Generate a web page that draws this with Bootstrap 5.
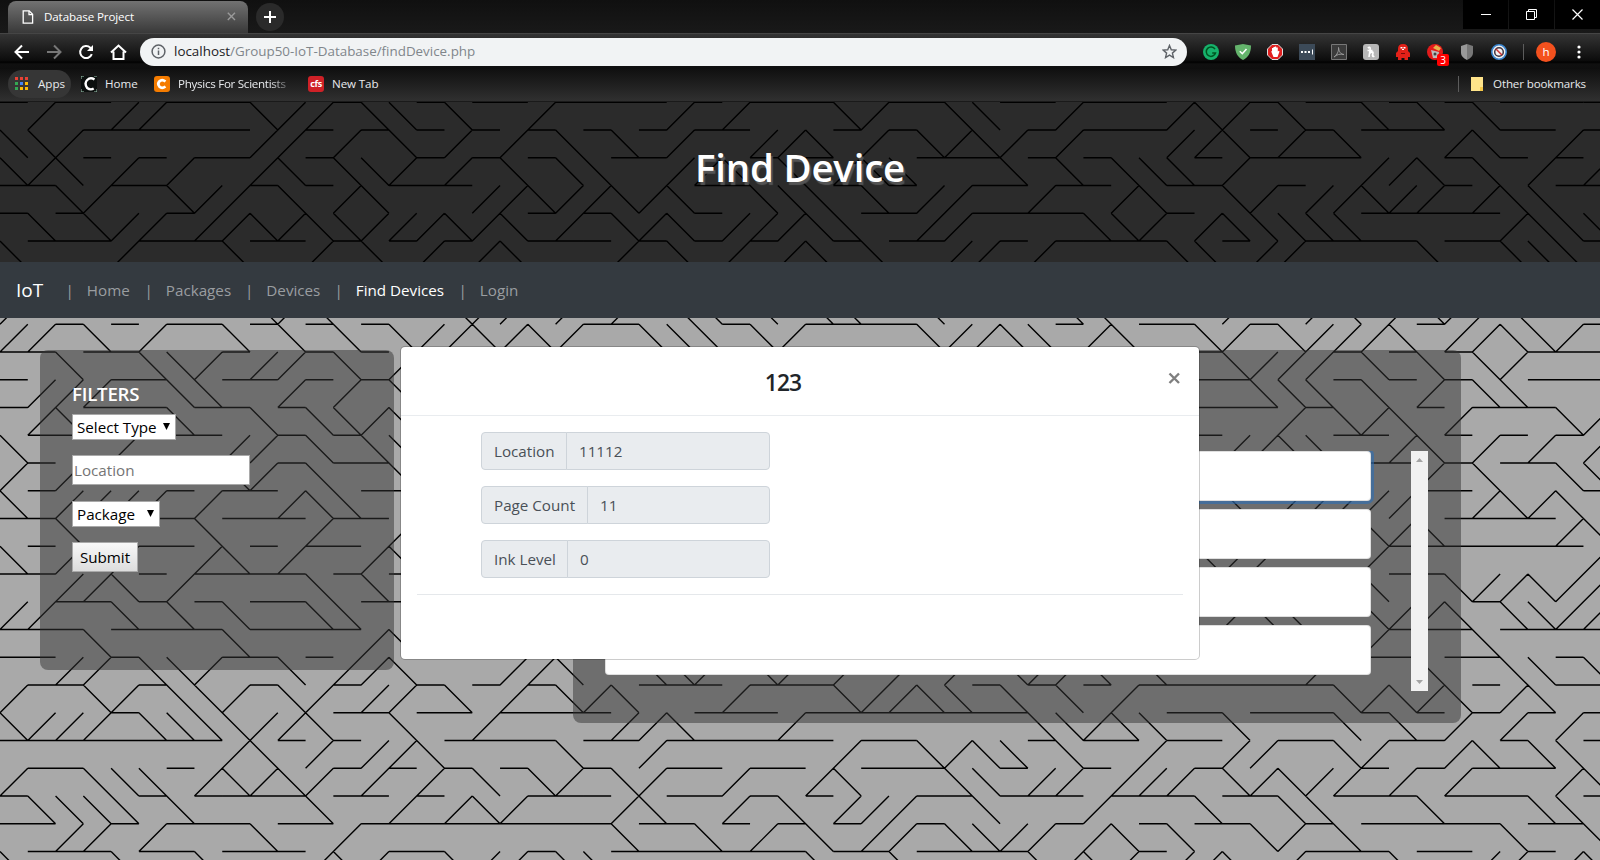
<!DOCTYPE html>
<html lang="en">
<head>
<meta charset="utf-8">
<title>Database Project</title>
<link rel="stylesheet" href="https://cdn.jsdelivr.net/npm/bootstrap@5.3.0/dist/css/bootstrap.min.css">
<style>
  body{font-family:"Open Sans","Noto Sans",sans-serif;font-size:15.2px;width:1600px;height:860px;overflow:hidden;background:#a9a9a9;color:#212529}
  svg{display:block;flex:none}
  .pattern{position:absolute;left:0;top:0;z-index:-1}
  /* browser chrome */
  .chrome{height:102px;font-size:11.6px;color:#e8eaed;background:#111}
  .tabstrip{height:33px;background:linear-gradient(#101010,#191919);padding-left:8px}
  .tab{width:240px;height:32px;margin-top:1px;border-radius:8px 8px 0 0;background:linear-gradient(#727272,#393939);padding:0 12px 1px 14px;letter-spacing:-.12px;color:#fff}
  .plus{width:28px;height:28px;border-radius:50%;background:#2a2a2a;margin:3px 0 0 8px}
  .winbtn{width:45px;height:29px;background:#000;margin-left:1px}
  .toolbar{height:36px;border-top:1px solid #454545;background:linear-gradient(#343434 0,#0b0b0b 27px,#000 28px,#101010 30px,#0e0e0e 36px);padding:1px 0 0 14px}
  .omni{width:1047px;height:28px;border-radius:14px;background:#f1f3f4;margin-left:13px;color:#80868b;font-size:13.4px;padding:0 10px 1px 11px}
  .omni b{font-weight:400;color:#202124}
  .bmbar{height:33px;background:linear-gradient(#101010,#303030);padding:0 14px 3px 8px;border-bottom:1px solid #1a1a1a}
  .apps{background:#363636;border-radius:14px;height:28px;width:63px;padding-left:7px}
  .fav{width:16px;height:16px;border-radius:3px;font-weight:700;line-height:16px;text-align:center}
  .ext{width:16px;margin-right:16px;position:relative}
  .cnt{position:absolute;left:10px;top:10px;width:12px;height:12px;background:#f00;border-radius:2px;font-size:10px;line-height:12px;text-align:center;color:#fff}
  .vr1{width:1px;height:16px;background:#5c5c5c}
  /* page */
  .hero{height:160px;background:rgba(0,0,0,.745);padding-top:40px}
  .hero h1{font-size:38.4px;font-weight:600;color:#fff;text-shadow:2px 3px 1px #555;line-height:50px;margin:0;letter-spacing:-.2px}
  .navrow{height:56px;background:#343a40;color:#9a9da0;padding-left:16px}
  .navrow li{display:flex;white-space:nowrap}
  .navrow li a{color:#9a9da0;text-decoration:none;margin-left:13px}
  .navrow li a.active{color:#fff}
  .logo{font-size:19px;color:#fff;width:49.5px}
  .panel{background:rgba(51,51,51,.5);border-radius:8px}
  .filters{margin-left:40px;width:354px;height:320px;padding:32px 32px}
  .filters h5{font-size:18.6px;font-weight:600;color:#fff;line-height:24px;margin:0 0 8px;letter-spacing:-.2px}
  .filters select,.filters input,.filters button{display:block;font:15.2px "Open Sans",sans-serif;border:1px solid #a9a9a9;border-radius:0;color:#000}
  .filters select{appearance:none;height:26px;padding:0 4px;background:#fff url("data:image/svg+xml,%3Csvg xmlns='http://www.w3.org/2000/svg' width='7' height='7'%3E%3Cpath d='M0 0h7L3.5 7z'/%3E%3C/svg%3E") no-repeat right 5px top 8px}
  .filters input{width:178px;height:31px;padding:0 1px 0 1px}
  .filters input::placeholder{color:#757575;opacity:1}
  .filters button{width:66px;height:30px;padding:0;background:linear-gradient(#f8f8f8,#ddd)}
  .results{width:888px;height:373px;margin-left:179px;padding:101px 33px 32px 32px}
  .scroller{height:240px;overflow:hidden}
  .rowitem{width:766px;height:50px;border-radius:4px;background:#fff;border:1px solid rgba(0,0,0,.125);background-clip:border-box;margin-bottom:8px}
  .rowitem.focus{box-shadow:0 0 0 3px rgba(38,112,190,.55)}
  .sbar{width:17px;background:#f1f1f1;padding:6px 0}
  .dialog{position:absolute;left:400px;top:346px;width:800px;height:314px;background:#fff;border:1px solid rgba(0,0,0,.2);background-clip:padding-box;border-radius:5px}
  .dhead{height:69px;border-bottom:1px solid #e9ecef;position:relative}
  .dhead h4{font-size:22.8px;font-weight:600;margin:0;padding-top:21px;line-height:30px;margin-right:34px;letter-spacing:-.9px}
  .dclose{position:absolute;right:18px;top:25px}
  .igrp{width:289px;height:38px;margin:0 0 16px 80px}
  .igrp>*{background:#e9ecef!important;color:#495057!important;border-color:#ced4da!important;font-size:15.2px;padding:0 12px;border-radius:4px}
  .dbody{padding-top:16px}
  .dbody hr{margin:0 16px;color:#dee2e6;opacity:.8}
</style>
</head>
<body class="position-relative">
<svg class="pattern" width="1600" height="860"><path id="maze" fill="none" stroke="#000" stroke-width="1.4"/></svg>

<div class="chrome">
  <div class="tabstrip d-flex">
    <div class="tab d-flex align-items-center">
      <svg width="12" height="14" viewBox="0 0 12 14" fill="none" stroke="#fff" stroke-width="1.3"><path d="M1.2.8h6l3.4 3.5v8.9H1.2z"/><path d="M7 .8v3.8h3.6"/></svg>
      <span class="flex-grow-1" style="margin-left:10px">Database Project</span>
      <svg width="9" height="9" stroke="#9a9a9a" stroke-width="1.4"><path d="M.8.8l7.2 7.2M8 .8L.8 8"/></svg>
    </div>
    <div class="plus d-flex align-items-center justify-content-center"><svg width="12" height="12" stroke="#fff" stroke-width="2"><path d="M6 0v12M0 6h12"/></svg></div>
    <div class="ms-auto d-flex">
      <div class="winbtn d-flex align-items-center justify-content-center"><svg width="10" height="2"><path d="M0 0h10v1H0z" fill="#fff"/></svg></div>
      <div class="winbtn d-flex align-items-center justify-content-center"><svg width="11" height="11" fill="none" stroke="#fff"><path d="M.5 2.5h8v8h-8zM2.5 2.5v-2h8v8h-2"/></svg></div>
      <div class="winbtn d-flex align-items-center justify-content-center"><svg width="11" height="11" stroke="#fff" stroke-width="1.2"><path d="M.5.5l10 10M10.5.5l-10 10"/></svg></div>
    </div>
  </div>
  <div class="toolbar d-flex align-items-center">
    <svg width="16" height="16" fill="none" stroke="#fff" stroke-width="2"><path d="M15 8H2M8 1.5L1.500 8 8 14.500"/></svg>
    <svg style="margin-left:17px" width="16" height="16" fill="none" stroke="#777" stroke-width="2"><path d="M0 8h13M7 1.500L13.500 8 7 14.500"/></svg>
    <svg style="margin-left:15px" width="16" height="16" fill="none" stroke="#fff" stroke-width="2"><path d="M13.800 10.200A6 6 0 1 1 12.300 3.700L13.500 5"/><path d="M15 1v6H9z" fill="#fff" stroke="none"/></svg>
    <svg style="margin-left:16px" width="17" height="16" fill="none" stroke="#fff" stroke-width="2"><path d="M1 8.500L8.500 1.500 16 8.500M3.500 7.500V15h10V7.500"/></svg>
    <div class="omni d-flex align-items-center">
      <svg width="15" height="15" fill="none" stroke="#5f6368" stroke-width="1.500"><circle cx="7.500" cy="7.500" r="6.400"/><path d="M7.500 6.500v4.600M7.500 3.700v1.600"/></svg>
      <span style="margin-left:8px"><b>localhost</b>/Group50-IoT-Database/findDevice.php</span>
      <svg class="ms-auto" width="15" height="15" viewBox="0 0 16 16" fill="none" stroke="#5f6368" stroke-width="1.500"><path d="M8 1.500l1.900 4.600 4.900.4-3.700 3.200 1.100 4.800L8 11.900l-4.200 2.600 1.100-4.800L1.200 6.500l4.900-.4z"/></svg>
    </div>
    <div class="d-flex align-items-center" style="margin-left:16px">
      <div class="ext"><svg width="16" height="16"><circle cx="8" cy="8" r="8" fill="#16b26b"/><path d="M12 5.200A4.700 4.700 0 1 0 12.500 9H9.200" fill="none" stroke="#052" stroke-width="1.500"/></svg></div>
      <div class="ext"><svg width="16" height="16"><path d="M0 1.500L8 0l8 1.500C16 9 13 13.500 8 16 3 13.500 0 9 0 1.500z" fill="#64b46c"/><path d="M4.800 7.200L7.300 9.700 11.500 5" fill="none" stroke="#fff" stroke-width="1.600"/></svg></div>
      <div class="ext"><svg width="16" height="16"><path d="M5 .5h6L15.500 5v6L11 15.500H5L.5 11V5z" fill="#e01f1f" stroke="#ddd"/><path d="M4 7l1 .5V4h1.400V3h1.400v-.5h1.400V3.500h1.600v4l1-.8.700.8L10.500 13h-4z" fill="#fff"/></svg></div>
      <div class="ext"><svg width="16" height="16"><path d="M0 0h16v16H0z" fill="#3c4a58"/><path d="M2 7h2v2H2zM5.500 7h2v2h-2zM9 7h2v2H9zM13 5.500h1v5h-1z" fill="#fff"/></svg></div>
      <div class="ext"><svg width="16" height="16" fill="none"><path d="M.5.500h15v15H.500z" fill="#3b3b3b" stroke="#777"/><path d="M3 13C6 11 8 7 7.500 3.500 8 8 10 10.500 13 10.500 9 9.500 6 10.500 3 13z" stroke="#999"/></svg></div>
      <div class="ext"><svg width="16" height="16"><rect width="16" height="16" rx="3" fill="#b7b7b7"/><path d="M6 13l1.200-8.500Q7 2.500 4.800 4M6.500 9.500q3.500-3 3.500-.5l-.5 2.500q.3 1.500 1.800.5M4.500 6.500h5" fill="none" stroke="#fff" stroke-width="1.600"/></svg></div>
      <div class="ext"><svg width="16" height="16"><path d="M3 5Q3 0 8 0t5 5v2l2 2v4h-2v3H9.500v-2h-3v2H3v-3H1V9l2-2z" fill="#e32119"/><path d="M5.500 3h2v1.500h-2zM8.500 3h2v1.500h-2zM7 5h2v1H7z" fill="#fff"/><path d="M6 9.500h4" stroke="#7a0b08"/></svg></div>
      <div class="ext"><svg width="16" height="16"><circle cx="8" cy="8" r="8" fill="#e21b1b"/><path d="M6 4l3-3 5 3-2 3z" fill="#e8b24c"/><path d="M4 6l8 2-1 6H6z" fill="#bbb"/><circle cx="8" cy="10" r="1.500" fill="#444"/></svg><span class="cnt">3</span></div>
      <div class="ext"><svg width="16" height="16"><path d="M8 0l6 2v7q0 4-6 7z" fill="#777"/><path d="M8 0L2 2v7q0 4 6 7z" fill="#999"/></svg></div>
      <div class="ext"><svg width="16" height="16"><circle cx="8" cy="8" r="7.200" fill="#f2f2f2" stroke="#3b86d0" stroke-width="1.600"/><circle cx="8" cy="8" r="4.300" fill="none" stroke="#403540" stroke-width="1.500"/><path d="M5 5l6 6" stroke="#c33" stroke-width="1.500"/></svg></div>
      <div class="vr1"></div>
      <div class="rounded-circle text-center text-white" style="width:20px;height:20px;background:#f4511e;margin-left:12px;line-height:19px">h</div>
      <svg style="margin-left:21px" width="4" height="14" fill="#fff"><circle cx="2" cy="2" r="1.600"/><circle cx="2" cy="7" r="1.600"/><circle cx="2" cy="12" r="1.600"/></svg>
    </div>
  </div>
  <div class="bmbar d-flex align-items-center">
    <div class="apps d-flex align-items-center">
      <svg width="13" height="13"><path d="M0 0h3v3H0zM5 0h3v3H5zM10 0h3v3h-3z" fill="#e94235"/><path d="M0 5h3v3H0z" fill="#34a853"/><path d="M5 5h3v3H5z" fill="#4285f4"/><path d="M10 5h3v3h-3z" fill="#fbbc05"/><path d="M0 10h3v3H0z" fill="#34a853"/><path d="M5 10h3v3H5zM10 10h3v3h-3z" fill="#fbbc05"/></svg>
      <span style="margin-left:10px">Apps</span>
    </div>
    <svg style="margin-left:10px" width="16" height="16"><path d="M0 0h16v16H0z" fill="#0b0f0e"/><path d="M13.500 3.500Q9.500.8 6.200 4t0 8q3.300 2.500 6.500.500" fill="none" stroke="#fff" stroke-width="2.400"/><path d="M0 0h3M13 0h3M0 0v3M0 13v3h3M16 13v3h-3" stroke="#9cc8b0" fill="none"/></svg>
    <span style="margin-left:8px;width:49px">Home</span>
    <div class="fav" style="background:#f57c00"><svg width="16" height="16"><path d="M11.500 5.500Q8 2.800 5.500 5.300t0 5.400q2.500 2.300 6-.2" fill="none" stroke="#fff" stroke-width="2.700"/></svg></div>
    <span class="text-nowrap" style="margin-left:8px;width:115px;margin-right:15px;letter-spacing:-.28px;-webkit-mask-image:linear-gradient(90deg,#000 80%,rgba(0,0,0,.2) 97%)">Physics For Scientists</span>
    <div class="fav" style="background:#cf2127;font-size:9px;letter-spacing:-.3px;color:#fff">cfs</div>
    <span style="margin-left:8px;letter-spacing:-.1px">New Tab</span>
    <div class="vr1 ms-auto"></div>
    <svg style="margin-left:12px" width="12" height="14"><path d="M0 0h12v11l-3 3H0z" fill="#ffe48a"/><path d="M9 10h3v4H9z" fill="#f7c948"/></svg>
    <span style="margin-left:10px;letter-spacing:-.15px">Other bookmarks</span>
  </div>
</div>

<header class="hero text-center"><h1>Find Device</h1></header>
<nav class="navrow d-flex align-items-center">
  <span class="logo">IoT</span>
  <ul class="list-unstyled d-flex m-0">
    <li style="width:79px">|<a href="#">Home</a></li>
    <li style="width:100.500px">|<a href="#">Packages</a></li>
    <li style="width:89.500px">|<a href="#">Devices</a></li>
    <li style="width:124px">|<a href="#" class="active">Find Devices</a></li>
    <li>|<a href="#">Login</a></li>
  </ul>
</nav>

<main class="d-flex align-items-start" style="padding-top:32px">
  <section class="panel filters">
    <h5>FILTERS</h5>
    <select style="width:104px"><option>Select Type</option></select>
    <input style="margin-top:15px;height:30px" placeholder="Location">
    <select style="width:88px;margin-top:16px"><option>Package</option></select>
    <button style="margin-top:15px">Submit</button>
  </section>
  <section class="panel results">
    <div class="scroller d-flex justify-content-between">
      <div>
        <div class="rowitem focus"></div><div class="rowitem"></div><div class="rowitem"></div><div class="rowitem"></div>
      </div>
      <div class="sbar d-flex flex-column justify-content-between align-items-center">
        <svg width="7" height="6"><path d="M0 5h7L3.500 1z" fill="#a3a3a3"/></svg>
        <svg width="7" height="6"><path d="M0 1h7L3.500 5z" fill="#a3a3a3"/></svg>
      </div>
    </div>
  </section>
</main>

<div class="dialog">
  <div class="dhead text-center"><h4>123</h4>
    <svg class="dclose" width="13" height="13" stroke="#7f7f7f" stroke-width="2.400"><path d="M1.500 1.500l9.500 9.500M11 1.500L1.500 11"/></svg>
  </div>
  <div class="dbody">
    <div class="input-group igrp"><span class="input-group-text" style="width:86px">Location</span><input class="form-control" value="11112" readonly></div>
    <div class="input-group igrp"><span class="input-group-text" style="width:107px">Page Count</span><input class="form-control" value="11" readonly></div>
    <div class="input-group igrp"><span class="input-group-text" style="width:87px">Ink Level</span><input class="form-control" value="0" readonly></div>
    <hr>
  </div>
</div>

<script>
  // One stroke per cell: f = rising diagonal, b = falling diagonal, - = top edge.
  // A "|" splits a row whose middle is hidden; the right part ends at the last column.
  const rows = [
    "-f--ff---bff-bb-b--f----f-f---bf--bb--f---fbf-b--b-b-b----",
    "bbf------ff-f-b-f-f-b-b-f--ffb-f-bfbf-f---ffb-f-b---fb--f-",
    "bfb-f-f--fb-bbf-f-b-bb--ffb-b-fbb---b-b-bbb-f----ffb-b-f-f",
    "--bf--bff-b-fb---ffbffbfb--bbb-b-ff--f--fb--bf-ffbff-fbb--",
    "-b-bff-ffbfbbfffbfb-f-bfb-fffbb--ff----bbf-fbbbbb-----fbbb",
    "b---f---b--f-b-f-fb---f-b-f-fb-b--ff-f----bb-ff----b--bbb-",
    "",
    "f--------bfb----bff-f-f-bb-b-bb--b----bb----f--fb-fbffb---",
    "ff-b-f--b-b-b-bffbfbf--bbb-bf----bffbb-fb--bf-bfffb-ffbbf-",
    "--b--bbf-ff-b-f|-bfff-b-b-bf---",
    "-fff--bb--f-f-b|--bbb-b-f-bb---",
    "-fb---b--b-bbfb|---f-bfb-f---bf",
    "b---f---ff-b-bb|-ffbb--fb-f-f-f",
    "f-f-----bf-b--b|--------f-b--bb",
    "b-ffff-f--fbb--|-b-fffff--fbfb-",
    "--b----b---f--f|------bfb----fb",
    "b-f-f--fb-f--fb|bff---f-------f",
    "--ffb-f----b-b-|------b--bffbff",
    "ff--b-b-b--bb--|-fbb--bffb-bbff",
    "---b----b----fb|------f---b----",
    "--ff-bbf--b-ffb---ffb--bbf-bf-f-f-f-bffb-b-----f---b--bb-b",
    "f--bf-bbf-bf-ff-b-f-bfb---f---bffbb-b-b-f-------bfbfb-fb--",
    "bfff-bbbbffb--b--f----ffb---f--------bbfbb--b---b-b-f-f-f-",
    "--------fb-f-ffb----b--f------f--bfbb-b--f--ff--bf--fb-bb-",
    "f--bbb-fbfbf-f-f-b-bf-bf--f--fb---bb-ff-fff-bfbff-f-f---fb",
    "-bbbb-b----b--f-fbf---fb--f-b-fff--b---f---b--bb---b---bb-",
    "--ff-f---b--f---------b--b-f-b-ff-bbff-fb-b--bf-b-----b--b",
    "b---b--b---fbf--bff-bb-------b--b----bfbf-ffb.f---b--ff-fb"
  ];
  const S = 27.78, T = 27.75, Y0 = 102.3;
  let d = "";
  rows.forEach((r, j) => {
    const [l, rt] = r.split("|");
    const put = (s, c0) => [...s].forEach((ch, i) => {
      const x = (c0 + i) * S, y = Y0 + j * T;
      if (ch === "f") d += `M${x + S} ${y}L${x} ${y + T}`;
      if (ch === "b") d += `M${x} ${y}L${x + S} ${y + T}`;
      if (ch === "-") d += `M${x} ${y}h${S}`;
    });
    put(l, 0);
    if (rt) put(rt, 58 - rt.length);
  });
  document.getElementById("maze").setAttribute("d", d);
</script>
<script src="https://cdn.jsdelivr.net/npm/bootstrap@5.3.0/dist/js/bootstrap.bundle.min.js"></script>
</body>
</html>
